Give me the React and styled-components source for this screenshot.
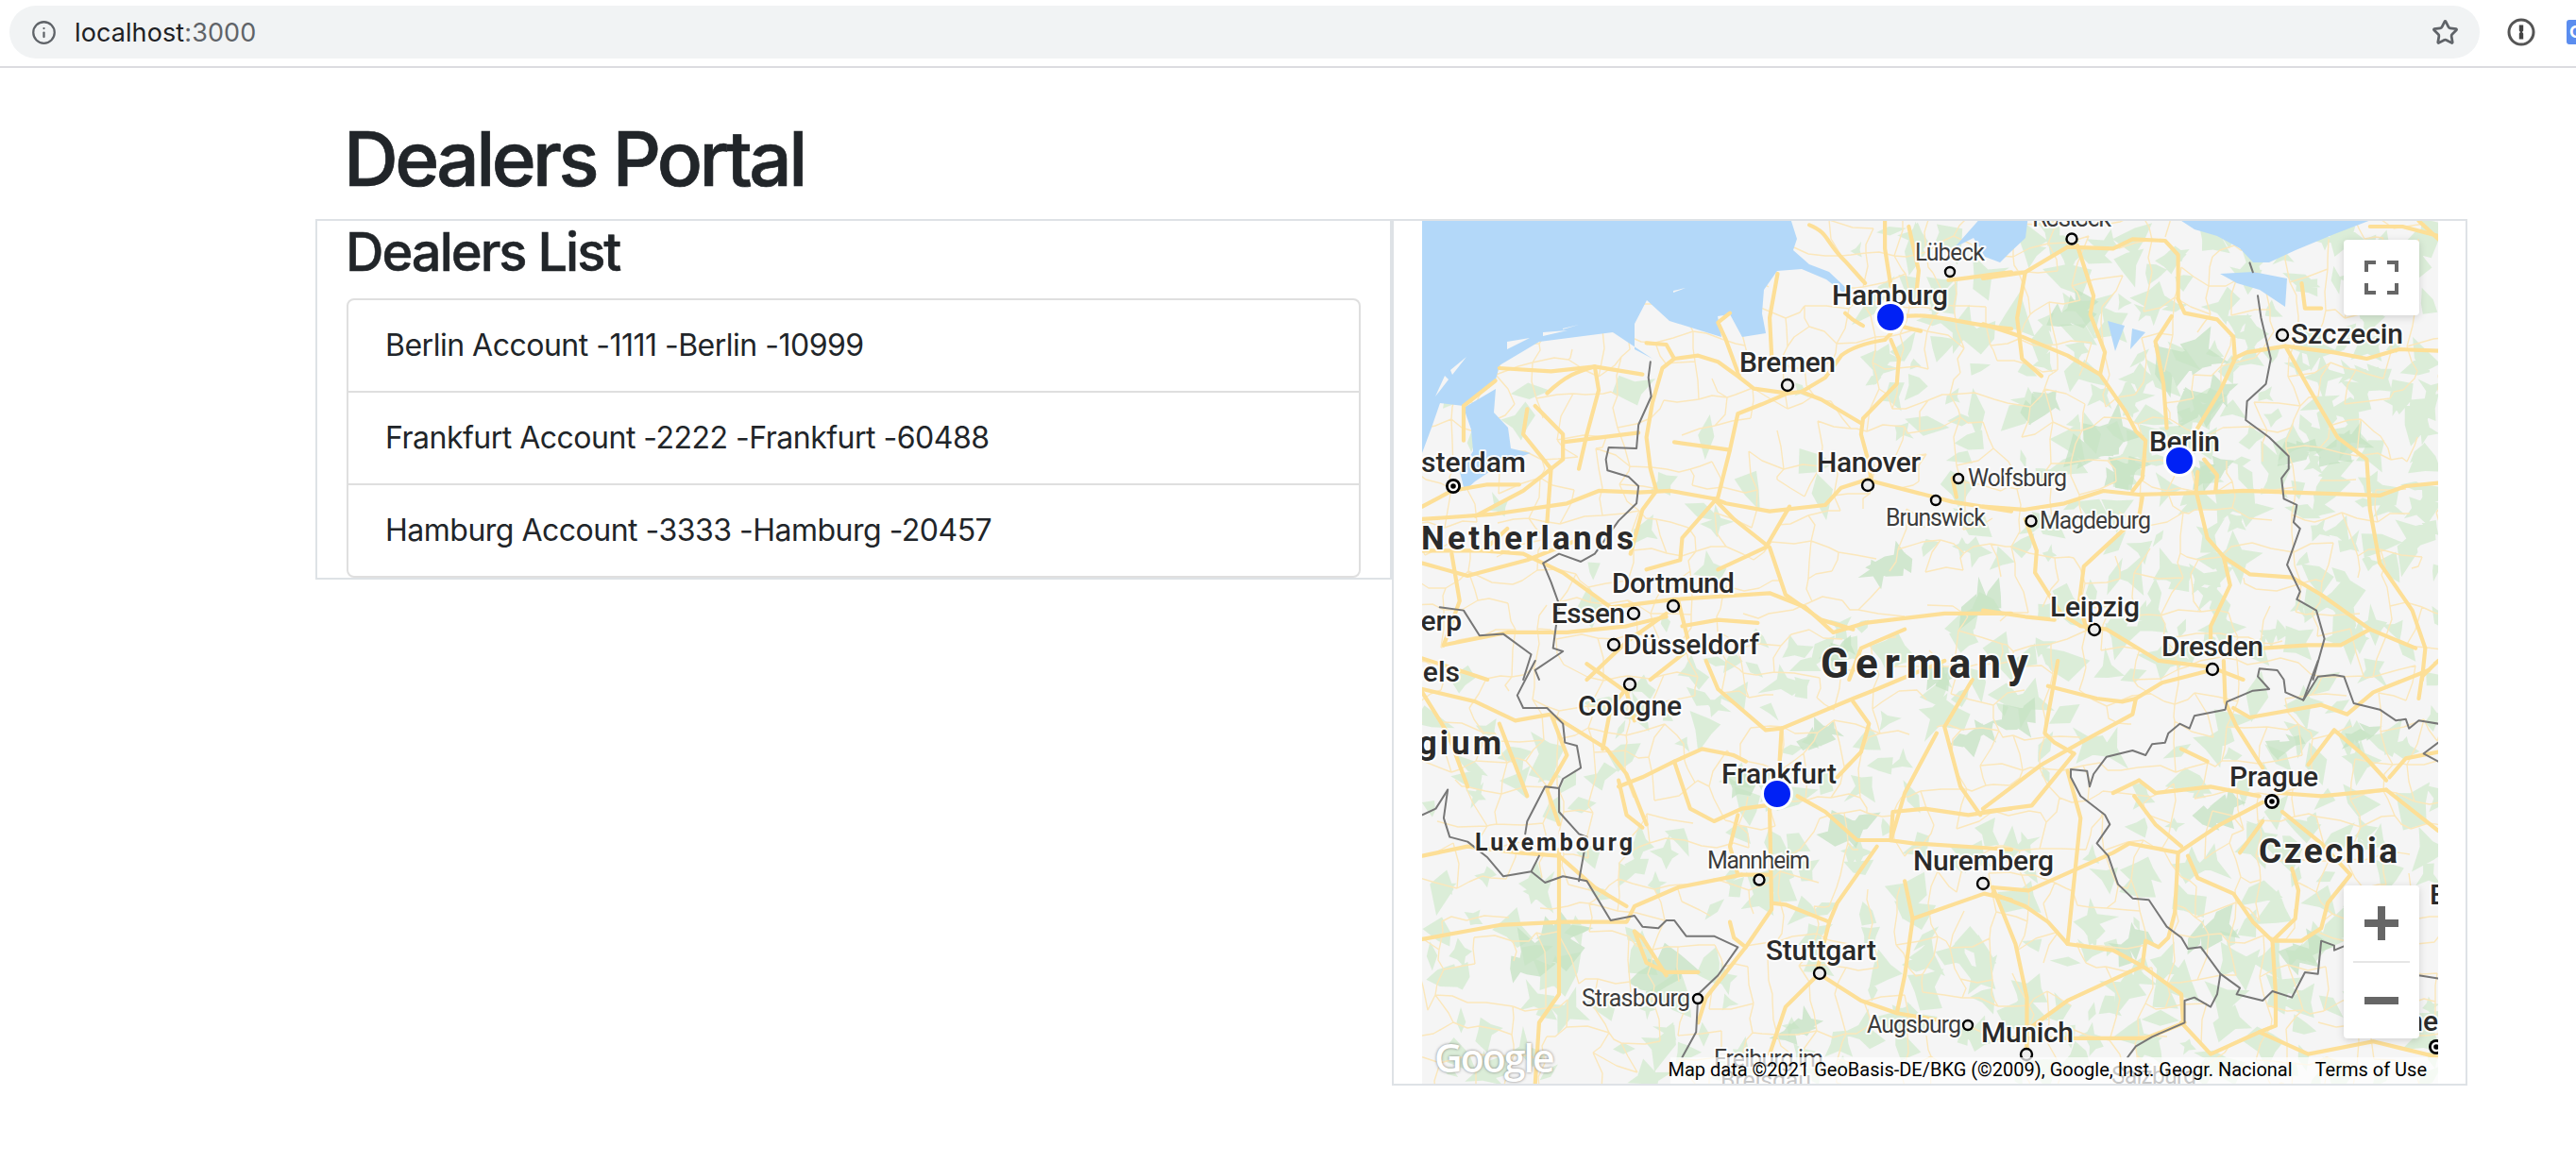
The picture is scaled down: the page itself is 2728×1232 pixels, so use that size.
import React from 'react'
import styled, { createGlobalStyle } from 'styled-components'
import { Info, Star } from 'lucide-react'

const GlobalStyle = createGlobalStyle`
  html, body { margin: 0; padding: 0; background: #fff; }
  body { font-family: Inter, "Liberation Sans", sans-serif; color: #212529; overflow: hidden; }
`

/* ---------- browser bar ---------- */
const Toolbar = styled.div`
  height: 72px;
  box-sizing: border-box;
  border-bottom: 2px solid #dcdce0;
  display: flex;
  align-items: flex-start;
  padding: 6px 0 0 10px;
  overflow: hidden;
`
const UrlPill = styled.div`
  flex: 0 0 2616px;
  height: 56px;
  border-radius: 28px;
  background: #f1f3f4;
  display: flex;
  align-items: center;
  padding: 0 22px 0 23px;
  box-sizing: border-box;
  color: #5f6368;
`
const UrlText = styled.div`
  margin-left: 19px;
  font-size: 27px;
  letter-spacing: 0.1px;
  flex: 1;
  color: #5f6368;
  b { font-weight: 400; color: #202124; }
`
const ExtensionIcons = styled.div`
  display: flex;
  align-items: center;
  height: 56px;
  margin-left: 29px;
  gap: 33px;
`
const ExtensionTile = styled.div`
  flex: none;
  width: 30px;
  height: 26px;
  border-radius: 3px;
  background: #5b8def;
  color: #fff;
  font-size: 18px;
  font-weight: 700;
  line-height: 26px;
  padding-left: 3px;
  box-sizing: border-box;
`

/* ---------- page ---------- */
const Page = styled.div`
  padding: 48px 0 0 334px;
  width: 2279px;
`
const Title = styled.h1`
  margin: 0 0 16px;
  padding-left: 30px;
  font-size: 80px;
  line-height: 96px;
  font-weight: 500;
  letter-spacing: -3.6px;
  -webkit-text-stroke: 0.7px #212529;
  color: #212529;
`
const Row = styled.div`
  display: flex;
  align-items: flex-start;
`
const ListColumn = styled.section`
  flex: 0 0 1140px;
  box-sizing: border-box;
  border: 2px solid #dee2e6;
  padding: 0 31px 0 31px;
  height: 382px;
`
const SubTitle = styled.h3`
  margin: 0 0 15px -1px;
  font-size: 56px;
  line-height: 67px;
  font-weight: 500;
  letter-spacing: -2px;
  -webkit-text-stroke: 0.5px #212529;
  color: #212529;
`
const DealerList = styled.ul`
  list-style: none;
  margin: 0;
  padding: 0;
  border: 2px solid #dfdfdf;
  border-radius: 8px;
`
const DealerItem = styled.li`
  padding: 24px 39px;
  font-size: 32px;
  line-height: 48px;
  letter-spacing: -0.5px;
  color: #212529;
  & + & { border-top: 2px solid #dfdfdf; }
`
const MapColumn = styled.section`
  flex: 0 0 1139px;
  box-sizing: border-box;
  border: 2px solid #dee2e6;
  padding: 0 29px 0 30px;
`
const MapFrame = styled.div`
  position: relative;
  width: 1076px;
  height: 914px;
  overflow: hidden;
  background: #f5f5f5;
  svg.map { display: block; }
`

/* ---------- map drawing ---------- */
const Minor = styled.path`
  fill: none;
  stroke: #fbe7bb;
  stroke-width: 1.4;
  stroke-linejoin: round;
`
const Layer = styled.g`
  path {
    fill: none;
    vector-effect: non-scaling-stroke;
    stroke-linejoin: round;
    stroke-linecap: round;
    stroke: ${p => p.$stroke};
    stroke-width: ${p => p.$width};
  }
`
const CityName = styled.text`
  font-family: Roboto, "Liberation Sans", sans-serif;
  font-size: ${p => p.$size}px;
  font-weight: ${p => p.$weight};
  letter-spacing: ${p => p.$spacing}px;
  fill: ${p => (p.$weight === 400 ? '#3c3c3c' : '#2a2a2a')};
  stroke: rgba(255, 255, 255, 0.9);
  stroke-width: 4px;
  paint-order: stroke;
  stroke-linejoin: round;
`
const CityDot = styled.circle`
  fill: ${p => (p.$capital ? '#000' : '#eeeeee')};
  stroke: ${p => (p.$capital ? '#fff' : '#000')};
  stroke-width: 2.4;
`
const Pin = styled.span`
  position: absolute;
  left: ${p => p.$x - 1506}px;
  top: ${p => p.$y - 234}px;
  width: 28px;
  height: 28px;
  border: 3.5px solid #fff;
  border-radius: 50%;
  background: #0021f5;
  transform: translate(-50%, -50%);
`
const MapButton = styled.div`
  position: absolute;
  right: 20px;
  width: 80px;
  background: #fff;
  border-radius: 4px;
  box-shadow: 0 2px 8px rgba(0, 0, 0, 0.15);
  display: flex;
  flex-direction: column;
  align-items: center;
  justify-content: center;
`
const FullscreenButton = styled(MapButton)`
  top: 20px;
  height: 80px;
`
const ZoomControl = styled(MapButton)`
  top: 704px;
  height: 162px;
`
const ZoomStep = styled.div`
  height: 80px;
  display: flex;
  align-items: center;
  justify-content: center;
`
const ZoomDivider = styled.div`
  width: 60px;
  height: 2px;
  background: #e6e6e6;
`
const Attribution = styled.div`
  position: absolute;
  right: 0;
  bottom: 0;
  width: 813px;
  height: 28px;
  box-sizing: border-box;
  padding: 0 12px 0 0;
  display: flex;
  justify-content: flex-end;
  gap: 24px;
  background: rgba(255, 255, 255, 0.72);
  font-family: Roboto, "Liberation Sans", sans-serif;
  font-size: 20px;
  line-height: 26px;
  color: #000;
  white-space: nowrap;
`
const GoogleMark = styled.div`
  position: absolute;
  left: 13px;
  bottom: 4px;
  font-family: "Open Sans", "Liberation Sans", sans-serif;
  font-size: 41px;
  line-height: 48px;
  font-weight: 600;
  letter-spacing: -2px;
  color: #fff;
  text-shadow: 0 0 3px rgba(90, 90, 90, 0.8);
`

/* seeded random so the texture stays the same on every load */
function makeRandom(seed) {
  let s = seed
  return () => {
    s = (s + 0x6d2b79f5) | 0
    let t = Math.imul(s ^ (s >>> 15), 1 | s)
    t = (t + Math.imul(t ^ (t >>> 7), 61 | t)) ^ t
    return ((t ^ (t >>> 14)) >>> 0) / 4294967296
  }
}

/* spiky shard, the map's forests are angular rather than round */
function shard(rand, cx, cy, r) {
  const n = 4 + Math.floor(rand() * 5)
  const spin = rand() * 6.28
  const pts = []
  for (let i = 0; i < n; i++) {
    const a = spin + (i / n) * Math.PI * 2
    const d = r * (i % 2 ? 0.3 + rand() * 0.35 : 0.8 + rand() * 0.6)
    pts.push(`${(cx + Math.cos(a) * d).toFixed(1)} ${(cy + Math.sin(a) * d).toFixed(1)}`)
  }
  return 'M' + pts.join('L') + 'Z'
}

function forestDensity(x, y) {
  if (x > 2120 && y < 680) return 0.6
  if (x > 2250) return 0.4
  if (x > 1960 && y < 680) return 0.28
  if (y > 620 && x > 1680) return 0.36
  if (y > 700) return 0.28
  return 0.05
}

const rand = makeRandom(41)
let forestPath = ''
for (let y = 240; y < 1150; y += 24) {
  for (let x = 1510; x < 2590; x += 24) {
    if (rand() < forestDensity(x, y)) {
      forestPath += shard(rand, x + rand() * 20, y + rand() * 20, 8 + rand() * 16)
    }
  }
}

const deepForest = [
  [2313, 385, 30], [2336, 425, 26], [2222, 470, 30], [2195, 330, 22], [2250, 500, 18], [2340, 500, 16],
  [2160, 430, 18], [2480, 475, 22], [1948, 690, 14], [2430, 480, 16],
  [1960, 880, 22], [1928, 780, 16], [2090, 780, 18], [2000, 600, 20], [2100, 640, 22], [1640, 1000, 28],
  [1760, 1030, 26], [1620, 1020, 20], [1905, 1090, 18], [2350, 860, 20], [2420, 790, 14], [2340, 990, 24],
  [2260, 1000, 18], [2440, 1010, 20], [2500, 780, 14], [2060, 715, 16], [2140, 760, 18], [1850, 830, 16],
]
let deepPath = ''
deepForest.forEach(([x, y, r]) => {
  deepPath += shard(rand, x, y, r) + shard(rand, x + r * 0.6, y - r * 0.4, r * 0.8) + shard(rand, x - r * 0.7, y + r * 0.3, r * 0.8)
})

/* fine road network from a jittered grid, each link has a bend */
const nodes = []
const step = 32
for (let j = 0; j * step < 960; j++) {
  nodes[j] = []
  for (let i = 0; i * step < 1120; i++) {
    nodes[j][i] = [1500 + i * step + (rand() - 0.5) * 24, 230 + j * step + (rand() - 0.5) * 24]
  }
}
const link = (a, b) => {
  const mx = (a[0] + b[0]) / 2 + (rand() - 0.5) * 10
  const my = (a[1] + b[1]) / 2 + (rand() - 0.5) * 10
  return `M${a[0].toFixed(0)} ${a[1].toFixed(0)}L${mx.toFixed(0)} ${my.toFixed(0)}L${b[0].toFixed(0)} ${b[1].toFixed(0)}`
}
let minorPath = ''
nodes.forEach((row, j) => {
  row.forEach((n, i) => {
    if (row[i + 1] && rand() < 0.62) minorPath += link(n, row[i + 1])
    if (nodes[j + 1] && rand() < 0.62) minorPath += link(n, nodes[j + 1][i])
  })
})

const seaPaths = [
  'M1500 228L1895 228L1903 253L1899 265L1916 280L1937 288L1956 306L1952 310L1934 296L1908 285L1882 287L1868 307L1866 332L1870 353L1845 357L1832 333L1819 335L1823 357L1768 340L1744 318L1731 343L1731 370L1750 380L1708 352L1630 362L1588 387L1584 402L1550 430L1525 427L1516 453L1506 480L1500 480Z',
  'M1550 432L1584 412L1582 437L1597 453L1600 475L1621 480L1592 490L1562 510L1551 520L1546 500L1560 478L1558 455Z',
  'M2100 228L2148 228L2145 252L2128 268L2118 278L2102 272L2090 252L2070 262Z',
  'M2301 228L2324 243L2348 250L2372 263L2386 278L2403 278L2431 265L2472 248L2524 228Z',
  'M2351 290L2386 288L2422 295L2420 325L2393 307L2369 300Z',
  'M2232 340L2240 372L2250 345Z',
  'M2258 348L2272 352L2256 370Z',
]
const islands = 'M1596 370L1620 358L1596 362ZM1634 352L1660 350L1634 356ZM1655 348L1672 344L1655 349ZM1538 397L1553 378L1536 392ZM1534 402L1524 415L1520 420L1530 398ZM1772 308L1785 305L1772 310Z'

const roadsNW = [
  'M1250 42L1250 130L1265 250', 'M1060 55C1110 80 1100 110 1150 170L1200 240', 'M1310 60L1335 200L1330 260',
  'M1410 230C1480 220 1500 215 1568 205', 'M1300 345C1380 335 1440 370 1568 385',
  'M1150 335C1170 360 1180 365 1195 375', 'M1300 380L1340 392',
  'M1265 400L1250 420C1200 430 1160 450 1140 470L1100 540L1040 585L1005 590L920 575L885 540L850 420L830 365L860 335',
  'M1265 420L1285 480L1280 560L1195 670L1190 720L1205 790L1215 860',
  'M1005 590L940 625L880 655L860 770L830 920L740 1050L735 1120L650 1150',
  'M1040 585L1090 610L1190 685', 'M885 540L830 490L780 470L720 480L690 510L665 620L650 730L660 830L675 900L640 960L610 1100',
  'M650 430L700 435L720 480', 'M1215 860L1140 890L1100 945L960 965L850 940L820 925L710 900L630 905L530 900L450 940L260 975L86 990',
  'M1220 870L1420 935L1568 965', 'M820 925L870 990L960 1080L1000 1230L1090 1310L1170 1340', 'M1010 950L950 1080L830 1150',
  'M280 510L410 520L520 505L640 530', 'M520 505L530 580L500 720L480 830', 'M400 590C450 530 480 520 520 505',
  'M270 550L190 630L190 740', 'M350 640L340 720L410 830L400 1000', 'M370 630L440 720L440 800L340 900L220 980',
  'M86 950L160 900L250 880L330 880', 'M440 745L630 715', 'M980 210L960 350L965 470', 'M86 1090L240 1090L340 1100L440 1160L560 1270',
  'M560 1270L720 1245L960 1225L1050 1270L1120 1350L1200 1320L1400 1290L1568 1290', 'M86 1130L200 1170L350 1120L470 1060',
  'M140 1390L300 1350L450 1350L600 1330L700 1300', 'M500 1500L600 1380L700 1290', 'M740 1330L830 1310L930 1320',
  'M160 1100L180 1250L140 1390', 'M660 1500L760 1400L730 1250', 'M1430 920L1420 860L1430 850', 'M1160 1500L1190 1400L1300 1340',
  'M860 770L720 745', 'M240 1090L300 1020', 'M80 1430L250 1500',
]
const roadsNE = [
  'M0 225L130 205L260 125L400 130L460 100L560 105L600 150L600 290L620 335L720 355L770 410L775 480L730 580L660 700',
  'M290 120L340 280L330 340L375 460L360 530', 'M130 205L105 350L120 480L180 535',
  'M0 370L120 410L260 470L360 530L440 650L470 710L500 740L490 860L460 900', 'M580 345L530 425L555 560L565 700',
  'M770 480L810 460L930 440L1080 460L1180 480L1280 450L1400 455',
  'M0 950L125 960L250 940L370 900L480 912L700 905L800 900L1100 910L1220 915L1300 885L1400 875',
  'M660 840L655 900L690 1050L740 1110L820 1165L950 1175L1040 1230L1190 1340L1330 1400', 'M680 800L720 850L715 900',
  'M740 1110L760 1200L700 1330L700 1380', 'M415 1040L310 1140L295 1260L320 1340', 'M490 920L480 980L415 1040',
  'M130 990L165 1090L160 1160L240 1290L300 1330L380 1340L540 1440L700 1460L800 1500', 'M0 1280L130 1300L220 1310',
  'M1190 1340L1100 1390L1000 1390L860 1400', 'M930 440L1000 570L1090 730L1180 800L1190 960L1220 1130L1320 1280L1360 1400L1350 1500',
  'M980 240L990 320L1040 320', 'M1190 60L1290 60L1400 90', 'M1340 42L1400 100',
]
const roadsSW = [
  'M86 90L220 130L320 190L410 170L550 280L600 360L650 520', 'M608 75L560 150L540 280', 'M800 0L830 90L950 220L990 215L1170 120L1230 90L1400 0',
  'M1170 130L1210 200L1190 290L1130 370', 'M990 215L985 320', 'M410 170L450 300L400 410L430 520', 'M580 400L640 370L720 320L790 280L870 300L900 320',
  'M720 320L760 470L820 510L890 470L950 460', 'M1030 430L1100 480L1180 570L1260 570L1320 580L1568 600', 'M1265 570L1270 480L1350 470L1460 490L1568 470',
  'M1380 230L1300 420L1265 570', 'M960 470L965 790L900 910L800 1070L780 1150', 'M880 490L860 590L880 680L960 680', 'M1230 590L1130 770L1110 830L1000 775L965 770',
  'M1110 830L1080 980', 'M890 680L730 720L620 780L600 830L440 830L280 840L86 885', 'M1090 1000L1190 1080L1280 1120L1420 1150', 'M1280 1120L1300 1000L1320 820L1300 700',
  'M1320 820L1500 740L1568 760', 'M430 600L430 1060L380 1150L370 1345', 'M620 860L650 960L700 990L780 990', 'M1080 1000L1000 1100L960 1250', 'M86 620L200 590L330 610L430 620',
  'M350 430L280 200', 'M430 620L520 720L600 780', 'M500 10L600 100L620 190', 'M580 380L600 490L640 530', 'M860 830L870 880L900 910', 'M86 100L150 230L200 400', 'M1470 60L1400 210L1440 400L1490 490',
  'M700 1000L640 880L620 860',
]
const roadsSE = [
  'M200 80L350 120L430 130L470 120L550 70L700 30', 'M470 120L460 170L300 260L180 330L0 470', 'M230 0L190 230L220 260L280 295', 'M0 480L150 460L280 295',
  'M30 720L140 730L270 670L400 610L450 580L600 610L730 520L860 450', 'M600 610L590 800L570 880L540 910L500 890L490 970', 'M630 620L660 690L770 740L830 830L890 890L900 1060L900 1160L850 1180',
  'M890 890L960 820L970 730L950 660', 'M860 510L790 610', 'M910 420L1040 430L1240 410', 'M480 380L530 420L700 400L850 430', 'M480 380L400 420', 'M1240 380L1170 300L1080 220L1000 330',
  'M1240 410L1400 540', 'M1250 370L1300 310L1400 290', 'M920 480L1040 580L1130 680L1060 770L1040 850L980 890L890 890', 'M740 0L745 130L780 210L860 340', 'M770 150L820 180L1040 140L1120 170L1200 100L1370 30',
  'M30 720L100 900L135 1070L135 1250', 'M30 740L130 780L200 830L260 900L400 920L490 970L610 1060L615 1140', 'M490 970L260 1080L140 1170', 'M260 900L280 700L300 500L260 350', 'M610 1150L700 1250L850 1180L1000 1250L1200 1210L1400 1260',
  'M0 1200L300 1200L500 1200L620 1150', 'M610 280L690 320', 'M465 430L530 520L610 590', 'M1400 0L1350 50L1340 120',
]

const bordersNW = [
  'M660 490L655 540L662 600L630 690L625 765L555 762L548 800L552 835L605 855L630 885L625 940L580 995L520 1100L485 1125L430 1100L390 1130L410 1190L430 1260L415 1400L440 1410L370 1470L380 1500',
  'M130 1270L190 1280L230 1360L290 1355L360 1420L340 1500',
]
const bordersNE = [
  'M820 175L830 205', 'M845 280L855 350L885 480L870 560L812 615L808 675L880 730L940 790L940 830L918 860L925 925L965 945L955 1000L975 1020L935 1135L975 1220L965 1245L1025 1280L1050 1370L1015 1500',
]
const bordersSW = [
  'M370 0L325 110L340 150L400 150L440 200L445 260L475 270L485 340L440 375L430 405L395 400L350 510L345 550', 'M430 405L430 480L480 550L500 560L480 700',
  'M150 410L120 470L86 490', 'M150 410L140 500L155 560L200 575L250 625L290 685L360 670L380 620',
  'M360 670L395 705L440 685L500 700L560 825L620 810L640 845L680 850L700 825L720 825L750 875L820 875L880 910L830 1000L780 1060L775 1180L740 1260',
]
const bordersSE = [
  'M1030 0L985 125L930 100L925 60L905 30L850 25L845 50L880 90L830 95L750 130L745 155L650 175L635 215L605 200L570 230L560 260L520 265L500 300L460 285L380 305L340 360L328 400L320 350L270 345L270 370L300 430L375 490L390 520L350 580L385 620L415 710L460 755L510 760L565 845L610 880L630 915L670 910L730 995L790 1040L780 1060L860 1080L890 1050L950 1070L990 990L1030 995L1040 890L1080 905L1080 920L1150 890',
  'M985 125L1030 50L1080 45L1110 50L1140 135L1220 155L1270 190L1300 185L1310 215L1340 190L1400 200', 'M1400 260L1355 295L1400 320', 'M730 995L720 1060L700 1100L650 1070L620 1080L620 1150L520 1195L470 1225L445 1260', 'M1340 1000L1400 1010',
]

const NW = 'translate(1470 220) scale(.4209 .3333)'
const NE = 'translate(2100 220) scale(.3444 .3333)'
const SW = 'translate(1470 700) scale(.4209 .3333)'
const SE = 'translate(2100 700) scale(.3444 .3333)'

const quadrants = (nw, ne, sw, se) => [[NW, nw], [NE, ne], [SW, sw], [SE, se]]

/* text, x, baseline y, width (null when the edge cuts it), size, weight, spacing, anchor */
const labels = [
  ['Rostock', 2152, 240, 84, 27, 400, 0],
  ['Lübeck', 2028, 276, 74, 25, 400, 0],
  ['Hamburg', 1940, 323, 123, 30, 500, 0],
  ['Bremen', 1842, 394, 102, 30, 500, 0],
  ['Szczecin', 2426, 364, 119, 30, 500, 0],
  ['Amsterdam', 1616, 500, null, 30, 500, 0, 'end'],
  ['Hanover', 1924, 500, 110, 30, 500, 0],
  ['Wolfsburg', 2084, 515, 105, 25, 400, 0],
  ['Berlin', 2276, 478, 75, 30, 500, 0],
  ['Brunswick', 1997, 557, 106, 25, 400, 0],
  ['Magdeburg', 2160, 560, 118, 25, 400, 0],
  ['Netherlands', 1505, 582, 228, 35, 700, 3],
  ['Dortmund', 1707, 628, 130, 30, 500, 0],
  ['Leipzig', 2171, 653, 95, 30, 500, 0],
  ['Essen', 1643, 660, 78, 30, 500, 0],
  ['Antwerp', 1548, 668, null, 30, 500, 0, 'end'],
  ['Düsseldorf', 1719, 693, 144, 30, 500, 0],
  ['Dresden', 2289, 695, 108, 30, 500, 0],
  ['Germany', 1928, 718, 224, 44, 700, 4],
  ['Brussels', 1546, 722, null, 30, 500, 0, 'end'],
  ['Cologne', 1671, 758, 110, 30, 500, 0],
  ['Belgium', 1593, 799, null, 35, 700, 3, 'end'],
  ['Frankfurt', 1823, 830, 122, 30, 500, 0],
  ['Prague', 2361, 833, 94, 30, 500, 0],
  ['Luxembourg', 1562, 901, 169, 25, 700, 2],
  ['Czechia', 2392, 914, 150, 37, 700, 3],
  ['Mannheim', 1808, 920, 109, 25, 400, 0],
  ['Nuremberg', 2026, 922, 149, 30, 500, 0],
  ['Brno', 2573, 958, null, 30, 500, 0],
  ['Stuttgart', 1870, 1017, 117, 30, 500, 0],
  ['Strasbourg', 1675, 1066, 115, 25, 400, 0],
  ['Vienne', 2582, 1092, null, 30, 500, 0, 'end'],
  ['Augsburg', 1977, 1094, 100, 25, 400, 0],
  ['Munich', 2098, 1104, 98, 30, 500, 0],
  ['Freiburg im', 1815, 1130, 116, 25, 400, 0],
  ['Salzburg', 2236, 1148, 90, 25, 400, 0],
  ['Breisgau', 1822, 1153, 96, 25, 400, 0],
]

const dots = [
  [2194, 253, 5.5], [2065, 288, 5], [1893, 408, 6], [2417, 355, 6], [1978, 514, 6], [2074, 507, 5], [2050, 530, 5],
  [2151, 552, 5.5], [1772, 642, 6], [1730, 650, 6], [1709, 683, 6], [2218, 667, 6], [2343, 709, 6], [1726, 725, 6],
  [1863, 932, 5.5], [2100, 936, 6], [1927, 1031, 6], [1798, 1058, 5], [2084, 1086, 5], [2146, 1117, 6],
]
const capitals = [[1539, 515], [2406, 849], [2580, 1109]]
const pins = [[2002, 336], [2308, 488], [1882, 841]]

const dealers = [
  'Berlin Account -1111 -Berlin -10999',
  'Frankfurt Account -2222 -Frankfurt -60488',
  'Hamburg Account -3333 -Hamburg -20457',
]

const MapDrawing = () => (
  <svg className="map" width="1076" height="914" viewBox="1506 234 1076 914">
    <path d={forestPath} fill="#d8ecd5" opacity="0.9" />
    <path d={deepPath} fill="#c4e2c1" opacity="0.75" />
    <Minor d={minorPath} />
    {seaPaths.map(d => <path key={d} d={d} fill="#b3d8f9" />)}
    <path d={islands} fill="#f5f5f5" />
    {quadrants(roadsNW, roadsNE, roadsSW, roadsSE).map(([t, list]) => (
      <Layer key={t} transform={t} $stroke="#fddf97" $width={4.2}>
        {list.map(d => <path key={d} d={d} />)}
      </Layer>
    ))}
    {quadrants(bordersNW, bordersNE, bordersSW, bordersSE).map(([t, list]) => (
      <Layer key={t} transform={t} $stroke="#777" $width={2}>
        {list.map(d => <path key={d} d={d} />)}
      </Layer>
    ))}
    {dots.map(([x, y, r]) => <CityDot key={x} cx={x} cy={y} r={r} />)}
    {capitals.map(([x, y]) => (
      <g key={x}>
        <circle cx={x} cy={y} r={8} fill="#000" />
        <CityDot cx={x} cy={y} r={4} $capital />
      </g>
    ))}
    {labels.map(([text, x, y, w, size, weight, spacing, anchor]) => (
      <CityName
        key={text}
        x={x}
        y={y}
        $size={size}
        $weight={weight}
        $spacing={spacing}
        textAnchor={anchor || 'start'}
        textLength={w || undefined}
      >
        {text}
      </CityName>
    ))}
  </svg>
)

const FullscreenIcon = () => (
  <svg width="36" height="36" viewBox="0 0 36 36" fill="#666">
    <path d="M0 0h12v4H4v8H0zM24 0h12v12h-4V4h-8zM0 24h4v8h8v4H0zM32 24h4v12H24v-4h8z" />
  </svg>
)
const PlusIcon = () => (
  <svg width="36" height="36" viewBox="0 0 36 36" fill="#666">
    <path d="M14 0h8v14h14v8H22v14h-8V22H0v-8h14z" />
  </svg>
)
const MinusIcon = () => (
  <svg width="36" height="8" viewBox="0 0 36 8" fill="#666">
    <rect width="36" height="8" />
  </svg>
)
const KeyholeIcon = () => (
  <svg width="30" height="30" viewBox="0 0 30 30">
    <circle cx="15" cy="15" r="13" fill="#fff" stroke="#555" strokeWidth="3" />
    <path d="M12.8 7.5h4.4v6l-1.2 1.5 1.2 1.5v6h-4.4v-6l1.2-1.5-1.2-1.5z" fill="#444" />
  </svg>
)

export default function App() {
  return (
    <>
      <GlobalStyle />
      <Toolbar>
        <UrlPill>
          <Info size={27} strokeWidth={2} />
          <UrlText><b>localhost</b>:3000</UrlText>
          <Star size={29} strokeWidth={2.3} color="#5f6368" />
        </UrlPill>
        <ExtensionIcons>
          <KeyholeIcon />
          <ExtensionTile>G</ExtensionTile>
        </ExtensionIcons>
      </Toolbar>
      <Page>
        <Title>Dealers Portal</Title>
        <Row>
          <ListColumn>
            <SubTitle>Dealers List</SubTitle>
            <DealerList>
              {dealers.map(d => <DealerItem key={d}>{d}</DealerItem>)}
            </DealerList>
          </ListColumn>
          <MapColumn>
            <MapFrame>
              <MapDrawing />
              {pins.map(([x, y]) => <Pin key={x} $x={x} $y={y} />)}
              <FullscreenButton><FullscreenIcon /></FullscreenButton>
              <ZoomControl>
                <ZoomStep><PlusIcon /></ZoomStep>
                <ZoomDivider />
                <ZoomStep><MinusIcon /></ZoomStep>
              </ZoomControl>
              <GoogleMark>Google</GoogleMark>
              <Attribution>
                <span>Map data ©2021 GeoBasis-DE/BKG (©2009), Google, Inst. Geogr. Nacional</span>
                <span>Terms of Use</span>
              </Attribution>
            </MapFrame>
          </MapColumn>
        </Row>
      </Page>
    </>
  )
}
